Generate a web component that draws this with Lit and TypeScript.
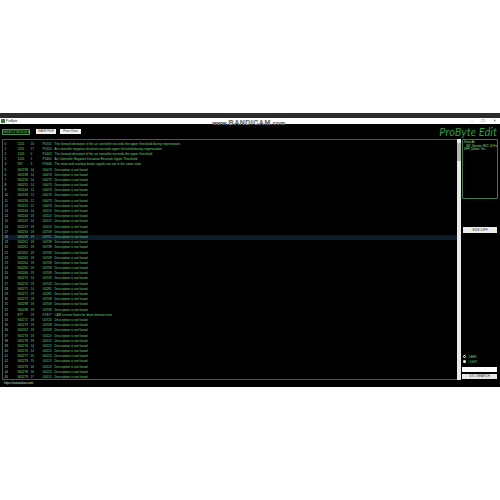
import { LitElement, html, css } from "lit";
import { customElement } from "lit/decorators.js";

type Row = [string, string, string, string];
const nf = "Description is not found";
const rows: Row[] = [
  ["1241", "15", "P0101", "The forward deviation of the air controller exceeds the upper threshold during regeneration"],
  ["1241", "17", "P0101", "Air controller negative deviation exceeds upper threshold during regeneration"],
  ["1241", "0", "P0402", "The forward deviation of the air controller exceeds the upper threshold"],
  ["1241", "1", "P0401", "Air Controller Negative Deviation Exceeds Upper Threshold"],
  ["937", "3", "P0506", "The main and auxiliary brake signals are not in the same state"],
  ["563198", "14", "U0073", nf],
  ["563198", "14", "U0073", nf],
  ["563230", "14", "U0073", nf],
  ["563231", "14", "U0073", nf],
  ["563244", "12", "U0073", nf],
  ["563199", "12", "U0073", nf],
  ["563230", "12", "U0073", nf],
  ["563231", "12", "U0073", nf],
  ["563244", "14", "U0113", nf],
  ["563244", "19", "U0113", nf],
  ["563247", "14", "U0113", nf],
  ["563247", "19", "U0113", nf],
  ["563253", "19", "U0709", nf],
  ["563255", "19", "U0721", nf],
  ["563261", "19", "U0739", nf],
  ["563261", "19", "U0739", nf],
  ["563262", "19", "U0709", nf],
  ["563263", "19", "U0709", nf],
  ["563264", "19", "U0709", nf],
  ["563265", "19", "U0709", nf],
  ["563266", "19", "U0709", nf],
  ["563270", "14", "U0743", nf],
  ["563270", "19", "U0743", nf],
  ["563271", "14", "U0281", nf],
  ["563271", "19", "U0281", nf],
  ["563272", "19", "U0709", nf],
  ["563298", "19", "U0709", nf],
  ["563298", "19", "U0709", nf],
  ["877", "19", "P1877", "CAN receive frame for drive timeout error"],
  ["563272", "19", "U0720", nf],
  ["563273", "19", "U0709", nf],
  ["563252", "19", "U0709", nf],
  ["563275", "19", "U0113", nf],
  ["563276", "19", "U0113", nf],
  ["563276", "14", "U0113", nf],
  ["563276", "14", "U0113", nf],
  ["563277", "15", "U0113", nf],
  ["563278", "15", "U0113", nf],
  ["563279", "16", "U0113", nf],
  ["563278", "16", "U0113", nf],
  ["563279", "17", "U0113", nf],
];

@customElement("app-root")
export class AppRoot extends LitElement {
  static styles = css`
    :host {
      display: block;
      width: 500px;
      height: 500px;
      background: #fff;
      font-family: "Liberation Sans", Arial, sans-serif;
      overflow: hidden;
    }
    .page {
      height: 500px;
      padding-top: 113px;
      box-sizing: border-box;
      position: relative;
    }
    .band {
      height: 4.5px;
      background: #2c2a2a;
    }
    .titlebar {
      height: 6.5px;
      background: #fff;
      display: flex;
      align-items: center;
      gap: 1px;
      padding-left: 1px;
      font-size: 3.2px;
      color: #222;
    }
    .appicon {
      width: 4px;
      height: 4px;
      background: #2f7d3c;
    }
    .spacer {
      flex: 1;
    }
    .winbtns {
      display: flex;
      gap: 8px;
      padding-right: 4px;
      color: #555;
      font-size: 3.5px;
    }
    .app {
      height: 263px;
      background: #000;
      display: flex;
      flex-direction: column;
    }
    .toolbar {
      height: 15px;
      display: flex;
      align-items: center;
      padding: 0 3px 0 2px;
      box-sizing: border-box;
    }
    .btn {
      height: 5px;
      background: #f1f1f1;
      color: #333;
      font-size: 3.2px;
      line-height: 5px;
      text-align: center;
      box-sizing: border-box;
      white-space: nowrap;
    }
    .select {
      width: 28px;
      height: 6px;
      line-height: 5px;
      background: #0b1a0b;
      border: 0.6px solid #4f8a55;
      color: #52c45e;
      margin-right: 6px;
    }
    .save {
      width: 20px;
      margin-right: 4px;
    }
    .free {
      width: 21px;
    }
    .brand {
      font-family: Lato, "Open Sans", sans-serif;
      font-style: italic;
      font-size: 11px;
      line-height: 12px;
      color: #2f9e3c;
      letter-spacing: 0.1px;
    }
    .main {
      height: 241px;
      display: flex;
      padding-left: 2px;
    }
    .list {
      width: 454.5px;
      box-sizing: border-box;
      border: 0.7px solid #4a5a4c;
      border-right: none;
      padding-top: 1.6px;
      overflow: hidden;
    }
    .row {
      height: 5.19px;
      display: grid;
      grid-template-columns: 13px 13px 12px 12px 1fr;
      padding-left: 1.6px;
      font-size: 3.15px;
      line-height: 5.19px;
      color: #6fd47c;
      white-space: nowrap;
    }
    .row.sel {
      background: #0c1c28;
    }
    .row .idx {
      color: #a8c8ac;
    }
    .scroll {
      width: 4.5px;
      background: #e8e8e8;
      display: flex;
      flex-direction: column;
      align-items: center;
      flex: none;
    }
    .thumb {
      width: 100%;
      height: 18px;
      margin-top: 4px;
      background: #b5b5b5;
    }
    .side {
      flex: 1;
      display: flex;
      flex-direction: column;
      padding: 0 2px 0 1px;
      min-width: 0;
    }
    .info {
      height: 60px;
      box-sizing: border-box;
      border: 0.7px solid #3f7a48;
      border-radius: 1px;
      padding: 1px;
      font-size: 2.8px;
      line-height: 3.6px;
      color: #8fe49a;
      white-space: nowrap;
      overflow: hidden;
    }
    .info div:nth-child(2) {
      padding-left: 2px;
    }
    .sidebtn {
      width: 34px;
      height: 6px;
      line-height: 6px;
      margin: 28px 0 0 1px;
      background: #ececec;
    }
    .grow {
      flex: 1;
    }
    .radio {
      display: flex;
      align-items: center;
      gap: 2.5px;
      height: 5px;
      font-size: 3px;
      color: #5fcf6b;
      padding-left: 1px;
    }
    .dot {
      width: 3px;
      height: 3px;
      border-radius: 50%;
      background: #fff;
      box-sizing: border-box;
    }
    .dot.on {
      border: 0.9px solid #fff;
      background: #000;
    }
    .input {
      width: 35px;
      height: 5px;
      margin-top: 3px;
      background: #fff;
    }
    .search {
      width: 35px;
      height: 5px;
      margin: 2px 0 1px;
      background: #e6e6e6;
    }
    .status {
      height: 7px;
      padding: 0 4px;
      font-size: 3px;
      line-height: 6px;
      color: #cfe8d2;
    }
    .watermark {
      position: absolute;
      left: 205px;
      top: 119px;
      width: 88px;
      text-align: center;
      font-weight: 700;
      font-size: 7px;
      line-height: 7px;
      letter-spacing: 0.5px;
      color: #9a9a9a;
      -webkit-text-stroke: 0.25px #333;
      white-space: nowrap;
    }
    .watermark small {
      font-size: 5.5px;
    }
  `;

  render() {
    return html`
      <div class="page">
        <div class="band"></div>
        <div class="titlebar">
          <span class="appicon"></span><span>ProByte</span><span class="spacer"></span>
          <span class="winbtns"><span>–</span><span>❐</span><span>✕</span></span>
        </div>
        <div class="app">
          <div class="toolbar">
            <div class="btn select">SELECT MODULE</div>
            <div class="btn save">SAVE FILE</div>
            <div class="btn free">Free View</div>
            <span class="spacer"></span>
            <div class="brand">ProByte Edit</div>
          </div>
          <div class="main">
            <div class="list">
              ${rows.map(
                (r, i) => html`<div class="row ${i === 18 ? "sel" : ""}">
                  <span class="idx">${i}</span><span>${r[0]}</span><span>${r[1]}</span><span>${r[2]}</span><span>${r[3]}</span>
                </div>`
              )}
            </div>
            <div class="scroll"><div class="thumb"></div></div>
            <div class="side">
              <div class="info">
                <div>Stock Air</div>
                <div>SW_Version: EDC 10 Ford</div>
                <div>DPF_Delete: Yes</div>
              </div>
              <div class="btn sidebtn">SIDE DIFF</div>
              <div class="grow"></div>
              <div class="radio"><span class="dot on"></span>DARK</div>
              <div class="radio"><span class="dot"></span>LIGHT</div>
              <div class="input"></div>
              <div class="btn search">DTC SEARCH</div>
            </div>
          </div>
          <div class="status">https://autosakas.com</div>
        </div>
        <div class="watermark"><small>www.</small>BANDICAM<small>.com</small></div>
      </div>
    `;
  }
}
